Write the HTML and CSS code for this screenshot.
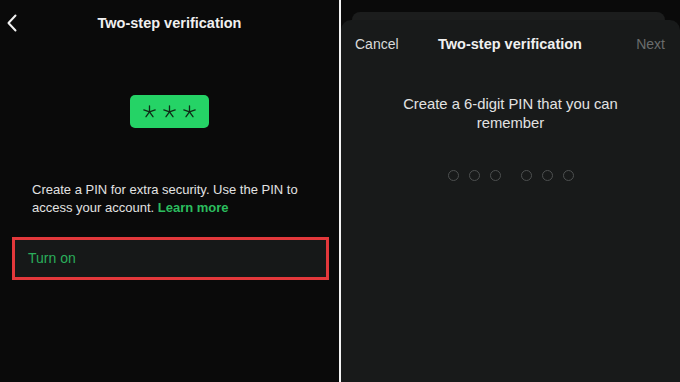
FILE: index.html
```html
<!DOCTYPE html>
<html>
<head>
<meta charset="utf-8">
<link rel="stylesheet" href="styles.css">
</head>
<body>
<div class="screen">
  <section class="panel left">
    <header class="lhead">
      <svg class="back" width="12" height="18" viewBox="0 0 12 18"><path d="M9.5 1.5 L2.5 9 L9.5 16.5" fill="none" stroke="#f2f2f2" stroke-width="2" stroke-linecap="round" stroke-linejoin="round"/></svg>
      <h1 class="title">Two-step verification</h1>
    </header>
    <div class="pinart">
      <svg width="79" height="33" viewBox="0 0 79 33">
        <g fill="none" stroke="#0f2a17" stroke-width="1.3" stroke-linecap="round">
          <g transform="translate(19.5 16.8)"><path d="M0 -6V0M0 0L5.7 -1.9M0 0L-5.7 -1.9M0 0L3.5 4.9M0 0L-3.5 4.9"/></g>
          <g transform="translate(39.5 16.8)"><path d="M0 -6V0M0 0L5.7 -1.9M0 0L-5.7 -1.9M0 0L3.5 4.9M0 0L-3.5 4.9"/></g>
          <g transform="translate(59.5 16.8)"><path d="M0 -6V0M0 0L5.7 -1.9M0 0L-5.7 -1.9M0 0L3.5 4.9M0 0L-3.5 4.9"/></g>
        </g>
      </svg>
    </div>
    <p class="desc">Create a PIN for extra security. Use the PIN to<br>access your account. <span class="link">Learn more</span></p>
    <div class="turnon">Turn on</div>
  </section>
  <div class="divider"></div>
  <section class="panel right">
    <div class="backcard"></div>
    <div class="sheet">
      <header class="rhead">
        <span class="cancel">Cancel</span>
        <h1 class="title">Two-step verification</h1>
        <span class="next">Next</span>
      </header>
      <p class="prompt">Create a 6-digit PIN that you can<br>remember</p>
      <div class="dots">
        <div class="group"><span class="dot"></span><span class="dot"></span><span class="dot"></span></div>
        <div class="group"><span class="dot"></span><span class="dot"></span><span class="dot"></span></div>
      </div>
    </div>
  </section>
</div>
</body>
</html>
```
FILE: styles.css
```css
* { box-sizing: border-box; }
html, body { margin: 0; padding: 0; }
body {
  width: 680px;
  height: 382px;
  overflow: hidden;
  background: #0a0a0a;
  font-family: "Liberation Sans", Arial, sans-serif;
  color: #e4e4e4;
}
.screen {
  display: flex;
  width: 680px;
  height: 382px;
}
.panel { height: 382px; }
.left {
  width: 339px;
  background: #0a0a0a;
  display: flex;
  flex-direction: column;
}
.divider {
  width: 2px;
  background: #f4f4f4;
}
.right {
  width: 339px;
  background: #0a0a0a;
  display: flex;
  flex-direction: column;
  padding-top: 12px;
}
.title {
  margin: 0;
  font-size: 14.5px;
  font-weight: bold;
  color: #f0f0f0;
  white-space: nowrap;
}
.lhead {
  height: 46px;
  display: flex;
  align-items: center;
  justify-content: center;
  position: relative;
}
.back {
  position: absolute;
  left: 6px;
  top: 14px;
}
.pinart {
  margin-top: 49px;
  align-self: center;
  width: 79px;
  height: 33px;
  background: #25d366;
  border-radius: 5px;
  display: flex;
}
.desc {
  margin: 53px 0 0 32px;
  font-size: 13px;
  line-height: 18px;
  color: #e2e2e2;
}
.link {
  color: #2bbd5e;
  font-weight: bold;
}
.turnon {
  margin: 20px 0 0 12px;
  width: 317px;
  height: 43px;
  border: 3px solid #e3383b;
  background: #161818;
  color: #2aae5b;
  font-size: 14px;
  display: flex;
  align-items: center;
  padding: 0 0 2px 13px;
}
.backcard {
  height: 10px;
  margin: 0 15px 0 11px;
  background: #1c1d1d;
  border-radius: 8px 8px 0 0;
  margin-bottom: -2px;
}
.sheet {
  flex: 1;
  background: #181a1a;
  border-radius: 10px 10px 0 0;
  display: flex;
  flex-direction: column;
}
.rhead {
  height: 48px;
  display: grid;
  grid-template-columns: 1fr auto 1fr;
  align-items: center;
  padding: 0 15px 0 14px;
}
.cancel {
  font-size: 14px;
  color: #dadada;
}
.next {
  font-size: 14px;
  color: #6a6c6c;
  justify-self: end;
}
.prompt {
  margin: 27px 0 0;
  text-align: center;
  font-size: 14.8px;
  line-height: 19px;
  color: #e2e2e2;
}
.dots {
  margin-top: 37px;
  display: flex;
  justify-content: center;
  gap: 20px;
}
.group {
  display: flex;
  gap: 10px;
}
.dot {
  width: 11px;
  height: 11px;
  border: 1.3px solid #4d5050;
  border-radius: 50%;
}
```
